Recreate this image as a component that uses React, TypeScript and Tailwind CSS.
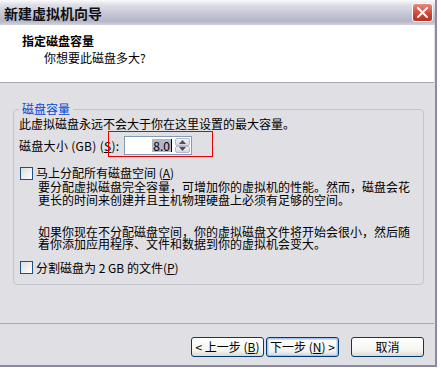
import React from "react";

function Check() {
  return (
    <span className="inline-block w-[13px] h-[13px] shrink-0 border border-[#1c5180] bg-[linear-gradient(135deg,#dcdcd7,#ffffff)]" />
  );
}

function SpinBtn({ up }: { up: boolean }) {
  return (
    <div className="flex-1 flex items-center justify-center rounded-[2px] border border-[#b7b7c9] bg-[linear-gradient(to_bottom,#f2f2f8,#d6d6e2)]">
      <svg width="7" height="4" viewBox="0 0 7 4">
        {up ? <path d="M0 4 L3.5 0 L7 4 Z" fill="#4d4d5c" /> : <path d="M0 0 L3.5 4 L7 0 Z" fill="#4d4d5c" />}
      </svg>
    </div>
  );
}

function Btn({ children, def }: { children: React.ReactNode; def?: boolean }) {
  return (
    <div
      className={
        "w-[73px] h-[20px] rounded-[3px] border border-[#003c74] bg-[linear-gradient(to_bottom,#ffffff,#f4f4f0_70%,#dcd8cf)] flex items-center justify-center text-[12px] leading-[14px] " +
        (def ? "shadow-[inset_0_0_0_1px_#a8c3f0,inset_0_0_0_2px_#cfdcf6]" : "")
      }
    >
      {children}
    </div>
  );
}

export default function App() {
  return (
    <div className="relative w-[441px] h-[370px] overflow-hidden bg-white text-black text-[12px] font-['Noto_Sans_CJK_SC','Liberation_Sans',sans-serif]">
      <div className="flex flex-col w-[437px] h-[367px] bg-[#e0dfe3] border-r-2 border-b-2 border-[#8a8aa2]">
        {/* title bar */}
        <div className="h-[25px] shrink-0 flex items-center justify-between pl-[4px] pr-[2px] bg-[linear-gradient(to_bottom,#fbfbfd_0%,#dedee8_20%,#c6c6d6_55%,#b6b6ca_85%,#d2d2de_100%)]">
          <span className="text-[14px] font-bold leading-[16px] text-[#111]">新建虚拟机向导</span>
          <div className="w-[21px] h-[19px] rounded-[3px] border border-white bg-[linear-gradient(to_bottom,#e98a7d,#cc4436_60%,#b83226)] flex items-center justify-center">
            <svg width="11" height="11" viewBox="0 0 11 11">
              <path d="M1 1 L10 10 M10 1 L1 10" stroke="#ffffff" strokeWidth="2" strokeLinecap="square" />
            </svg>
          </div>
        </div>

        {/* header */}
        <div className="h-[58px] shrink-0 bg-white border-b border-[#a9a9b4] mr-[1px] pt-[9px]">
          <div className="pl-[22px] font-bold text-[12px] leading-[14px]">指定磁盘容量</div>
          <div className="pl-[44px] mt-[3px] leading-[14px]">你想要此磁盘多大?</div>
        </div>

        {/* body */}
        <div className="flex-1 pt-[18px] pl-[13px]">
          <fieldset className="w-[411px] border border-[#c4c4cc] rounded-[4px] pl-[5px] pr-[4px] pb-[10px]">
            <legend className="px-[3px] text-[#0046d5] leading-[16px]">磁盘容量</legend>
            <div className="h-[13px] leading-[13px]">此虚拟磁盘永远不会大于你在这里设置的最大容量。</div>
            <div className="relative mt-[6px] h-[19px] flex items-center">
              <span className="w-[105px] leading-[14px] tracking-[0.3px]">
                磁盘大小 (GB) (<span className="underline">S</span>):
              </span>
              <div className="w-[68px] h-[19px] border border-[#7f9db9] bg-white flex items-stretch">
                <div className="flex-1 flex items-center justify-end">
                  <span className="h-[13px] whitespace-nowrap bg-[#b4b6c6] leading-[13px] px-[1px]">8.0</span>
                  <span className="w-[1px] h-[13px] bg-black" />
                </div>
                <div className="w-[15px] ml-[3px] mr-[1px] my-[1px] flex flex-col">
                  <SpinBtn up />
                  <SpinBtn up={false} />
                </div>
              </div>
              <div className="absolute left-[89px] top-[-5px] w-[105px] h-[26px] border border-[#e00000]" />
            </div>
            <div className="mt-[11px] h-[14px] flex items-center gap-[3px] ml-[1px]">
              <Check />
              <span className="leading-[14px]">
                马上分配所有磁盘空间 (<span className="underline">A</span>)
              </span>
            </div>
            <div className="pl-[19px] leading-[13px]">
              <div>要分配虚拟磁盘完全容量，可增加你的虚拟机的性能。然而，磁盘会花</div>
              <div>更长的时间来创建并且主机物理硬盘上必须有足够的空间。</div>
            </div>
            <div className="pl-[19px] leading-[12px] mt-[20px]">
              <div>如果你现在不分配磁盘空间，你的虚拟磁盘文件将开始会很小，然后随</div>
              <div>着你添加应用程序、文件和数据到你的虚拟机会变大。</div>
            </div>
            <div className="mt-[11px] h-[13px] flex items-center gap-[3px] ml-[1px]">
              <Check />
              <span className="leading-[14px]">
                分割磁盘为 2 GB 的文件(<span className="underline">P</span>)
              </span>
            </div>
          </fieldset>
        </div>

        {/* footer */}
        <div className="h-[42px] shrink-0 border-t border-[#a9a9b4] mr-[1px] pt-[13px] pr-[10px] flex justify-end items-start">
          <Btn>
            &lt; 上一步 (<span className="underline">B</span>)
          </Btn>
          <div className="ml-[2px]">
            <Btn def>
              下一步 (<span className="underline">N</span>) &gt;
            </Btn>
          </div>
          <div className="ml-[12px]">
            <Btn>取消</Btn>
          </div>
        </div>
      </div>
    </div>
  );
}
